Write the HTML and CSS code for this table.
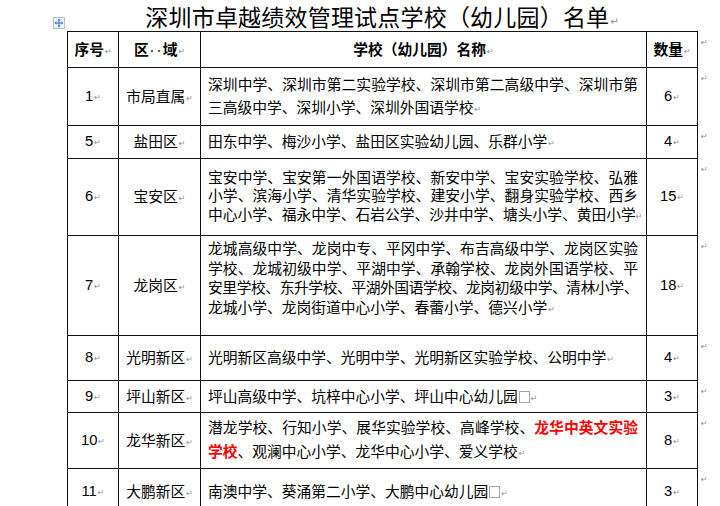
FILE: index.html
```html
<!DOCTYPE html>
<html lang="zh-CN">
<head>
<meta charset="utf-8">
<title>深圳市卓越绩效管理试点学校（幼儿园）名单</title>
<link rel="stylesheet" href="styles.css">
</head>
<body>
<div class="doc">
  <h1 class="title">深圳市卓越绩效管理试点学校（幼儿园）名单<span class="pm">↵</span></h1>
  <div class="tablewrap">
    <span class="handle" aria-hidden="true">
      <svg width="12" height="12" viewBox="0 0 12 12">
        <rect x="0.5" y="0.5" width="11" height="11" fill="#f3f5fa" stroke="#b8bcc6"/>
        <path d="M6 3v6M3 6h6" stroke="#2f6fd8" stroke-width="1"/>
        <path d="M6 1.6L4.3 3.4h3.4z M6 10.4L4.3 8.6h3.4z M1.6 6L3.4 4.3v3.4z M10.4 6L8.6 4.3v3.4z" fill="#2f6fd8"/>
      </svg>
    </span>
    <table class="list">
      <colgroup>
        <col class="c1"><col class="c2"><col class="c3"><col class="c4"><col class="c5">
      </colgroup>
      <thead>
        <tr class="h-head">
          <th class="no">序号<span class="pm">↵</span></th>
          <th class="area">区<span class="sp">·</span><span class="sp">·</span>域<span class="pm">↵</span></th>
          <th class="head3">学校（幼儿园）名称<span class="pm">↵</span></th>
          <th class="qty">数量<span class="pm">↵</span></th>
          <td class="eor"><span class="pm">↵</span></td>
        </tr>
      </thead>
      <tbody>
        <tr class="h58">
          <td class="no num">1<span class="pm">↵</span></td>
          <td class="area">市局直属<span class="pm">↵</span></td>
          <td class="txt lh23">
            <span class="ln">深圳中学、深圳市第二实验学校、深圳市第二高级中学、深圳市第</span>
            <span class="ln last">三高级中学、深圳小学、深圳外国语学校<span class="pm">↵</span></span>
          </td>
          <td class="qty num">6<span class="pm">↵</span></td>
          <td class="eor"><span class="pm">↵</span></td>
        </tr>
        <tr class="h33">
          <td class="no num">5<span class="pm">↵</span></td>
          <td class="area">盐田区<span class="pm">↵</span></td>
          <td class="txt">
            <span class="ln last">田东中学、梅沙小学、盐田区实验幼儿园、乐群小学<span class="pm">↵</span></span>
          </td>
          <td class="qty num">4<span class="pm">↵</span></td>
          <td class="eor"><span class="pm">↵</span></td>
        </tr>
        <tr class="h77">
          <td class="no num">6<span class="pm">↵</span></td>
          <td class="area">宝安区<span class="pm">↵</span></td>
          <td class="txt lh18">
            <span class="ln">宝安中学、宝安第一外国语学校、新安中学、宝安实验学校、弘雅</span>
            <span class="ln">小学、滨海小学、清华实验学校、建安小学、翻身实验学校、西乡</span>
            <span class="ln last">中心小学、福永中学、石岩公学、沙井中学、塘头小学、黄田小学<span class="pm hang">↵</span></span>
          </td>
          <td class="qty num">15<span class="pm">↵</span></td>
          <td class="eor"><span class="pm">↵</span></td>
        </tr>
        <tr class="h100">
          <td class="no num">7<span class="pm">↵</span></td>
          <td class="area">龙岗区<span class="pm">↵</span></td>
          <td class="txt lh19 top">
            <span class="ln">龙城高级中学、龙岗中专、平冈中学、布吉高级中学、龙岗区实验</span>
            <span class="ln">学校、龙城初级中学、平湖中学、承翰学校、龙岗外国语学校、平</span>
            <span class="ln tight">安里学校、东升学校、平湖外国语学校、龙岗初级中学、清林小学、</span>
            <span class="ln last">龙城小学、龙岗街道中心小学、春蕾小学、德兴小学<span class="pm">↵</span></span>
          </td>
          <td class="qty num">18<span class="pm">↵</span></td>
          <td class="eor"><span class="pm">↵</span></td>
        </tr>
        <tr class="h45">
          <td class="no num">8<span class="pm">↵</span></td>
          <td class="area">光明新区<span class="pm">↵</span></td>
          <td class="txt">
            <span class="ln last">光明新区高级中学、光明中学、光明新区实验学校、公明中学<span class="pm">↵</span></span>
          </td>
          <td class="qty num">4<span class="pm">↵</span></td>
          <td class="eor"><span class="pm">↵</span></td>
        </tr>
        <tr class="h32">
          <td class="no num">9<span class="pm">↵</span></td>
          <td class="area">坪山新区<span class="pm">↵</span></td>
          <td class="txt">
            <span class="ln last">坪山高级中学、坑梓中心小学、坪山中心幼儿园<span class="box"></span><span class="pm">↵</span></span>
          </td>
          <td class="qty num">3<span class="pm">↵</span></td>
          <td class="eor"><span class="pm">↵</span></td>
        </tr>
        <tr class="h56">
          <td class="no num">10<span class="pm">↵</span></td>
          <td class="area">龙华新区<span class="pm">↵</span></td>
          <td class="txt lh24">
            <span class="ln">潜龙学校、行知小学、展华实验学校、高峰学校、<strong class="hl">龙华中英文实验</strong></span>
            <span class="ln last"><strong class="hl">学校</strong>、观澜中心小学、龙华中心小学、爱义学校<span class="pm">↵</span></span>
          </td>
          <td class="qty num">8<span class="pm">↵</span></td>
          <td class="eor"><span class="pm">↵</span></td>
        </tr>
        <tr class="h46">
          <td class="no num">11<span class="pm">↵</span></td>
          <td class="area">大鹏新区<span class="pm">↵</span></td>
          <td class="txt">
            <span class="ln last">南澳中学、葵涌第二小学、大鹏中心幼儿园<span class="box"></span><span class="pm">↵</span></span>
          </td>
          <td class="qty num">3<span class="pm">↵</span></td>
          <td class="eor"><span class="pm">↵</span></td>
        </tr>
      </tbody>
    </table>
  </div>
</div>
</body>
</html>
```

FILE: styles.css
```css
html, body {
  margin: 0;
  padding: 0;
  background: #fff;
}

body {
  width: 720px;
  height: 506px;
  overflow: hidden;
  font-family: "Noto Sans CJK SC", "Noto Sans", sans-serif;
  color: #000;
}

.doc {
  margin-left: 67px;
  width: 645px;
}

.title {
  margin: 0;
  padding-top: 2px;
  width: 630px;
  height: 29px;
  line-height: 29px;
  font-size: 23px;
  font-weight: 400;
  letter-spacing: 0.2px;
  text-align: center;
  white-space: nowrap;
}

.title .pm {
  font-size: 10px;
  letter-spacing: 0;
}

.tablewrap {
  position: relative;
}

.handle {
  position: absolute;
  left: -14px;
  top: -14px;
  width: 12px;
  height: 12px;
  line-height: 0;
}

table.list {
  border-collapse: collapse;
  table-layout: fixed;
  width: 645px;
}

col.c1 { width: 51px; }
col.c2 { width: 82px; }
col.c3 { width: 446px; }
col.c4 { width: 51px; }
col.c5 { width: 15px; }

.list th,
.list td {
  border: 1px solid #111;
  padding: 0;
  vertical-align: middle;
  text-align: center;
  font-size: 14.75px;
  line-height: 19px;
  white-space: nowrap;
}

.list th {
  font-weight: 700;
}

.list .eor {
  border: none;
  vertical-align: top;
  text-align: left;
  padding: 0 0 0 3px;
}

.list .eor .pm {
  display: block;
  margin: 6px 0 0 0;
  line-height: 10px;
}

.no { padding-left: 5px; }
.area { padding-left: 6px; }
.qty { padding-right: 9px; }
.head3 { padding-right: 8px; }

.num {
  font-family: "Liberation Sans", Arial, sans-serif;
  font-size: 14.5px;
}

.list td.txt {
  text-align: left;
  padding: 0 8px 0 7px;
}

.txt .ln {
  display: block;
  text-align: justify;
  text-align-last: justify;
}

.txt .ln.last {
  text-align-last: left;
}

.txt .ln.tight {
  letter-spacing: -0.45px;
}

.list td.lh23 { line-height: 23px; }
.list td.lh18 { line-height: 18.5px; }
.list td.lh19 { line-height: 19.5px; }
.list td.lh24 { line-height: 24px; }
.list td.top { vertical-align: top; }
.list td.top .ln:first-child { margin-top: 2px; }

.hl {
  color: #ff0000;
  font-weight: 700;
}

.pm {
  font-family: "DejaVu Sans", sans-serif;
  font-size: 8px;
  font-weight: 400;
  color: #8c8c8c;
  margin-left: 1px;
  vertical-align: 1px;
}

.pm.hang {
  display: inline-block;
  width: 0;
  margin-left: 0;
}

.sp {
  display: inline-block;
  width: 7px;
  text-align: center;
  font-family: "Liberation Sans", sans-serif;
  font-weight: 700;
  font-size: 12px;
  color: #333;
}

.box {
  display: inline-block;
  width: 9px;
  height: 10px;
  border: 1px solid #aaa59c;
  margin-left: 1px;
  vertical-align: -1px;
}

tr.h-head > * { height: 35px; }
tr.h58 > * { height: 57px; }
tr.h33 > * { height: 32px; }
tr.h77 > * { height: 76px; }
tr.h100 > * { height: 99px; }
tr.h45 > * { height: 44px; }
tr.h32 > * { height: 31px; }
tr.h56 > * { height: 55px; }
tr.h46 > * { height: 45px; }
```
